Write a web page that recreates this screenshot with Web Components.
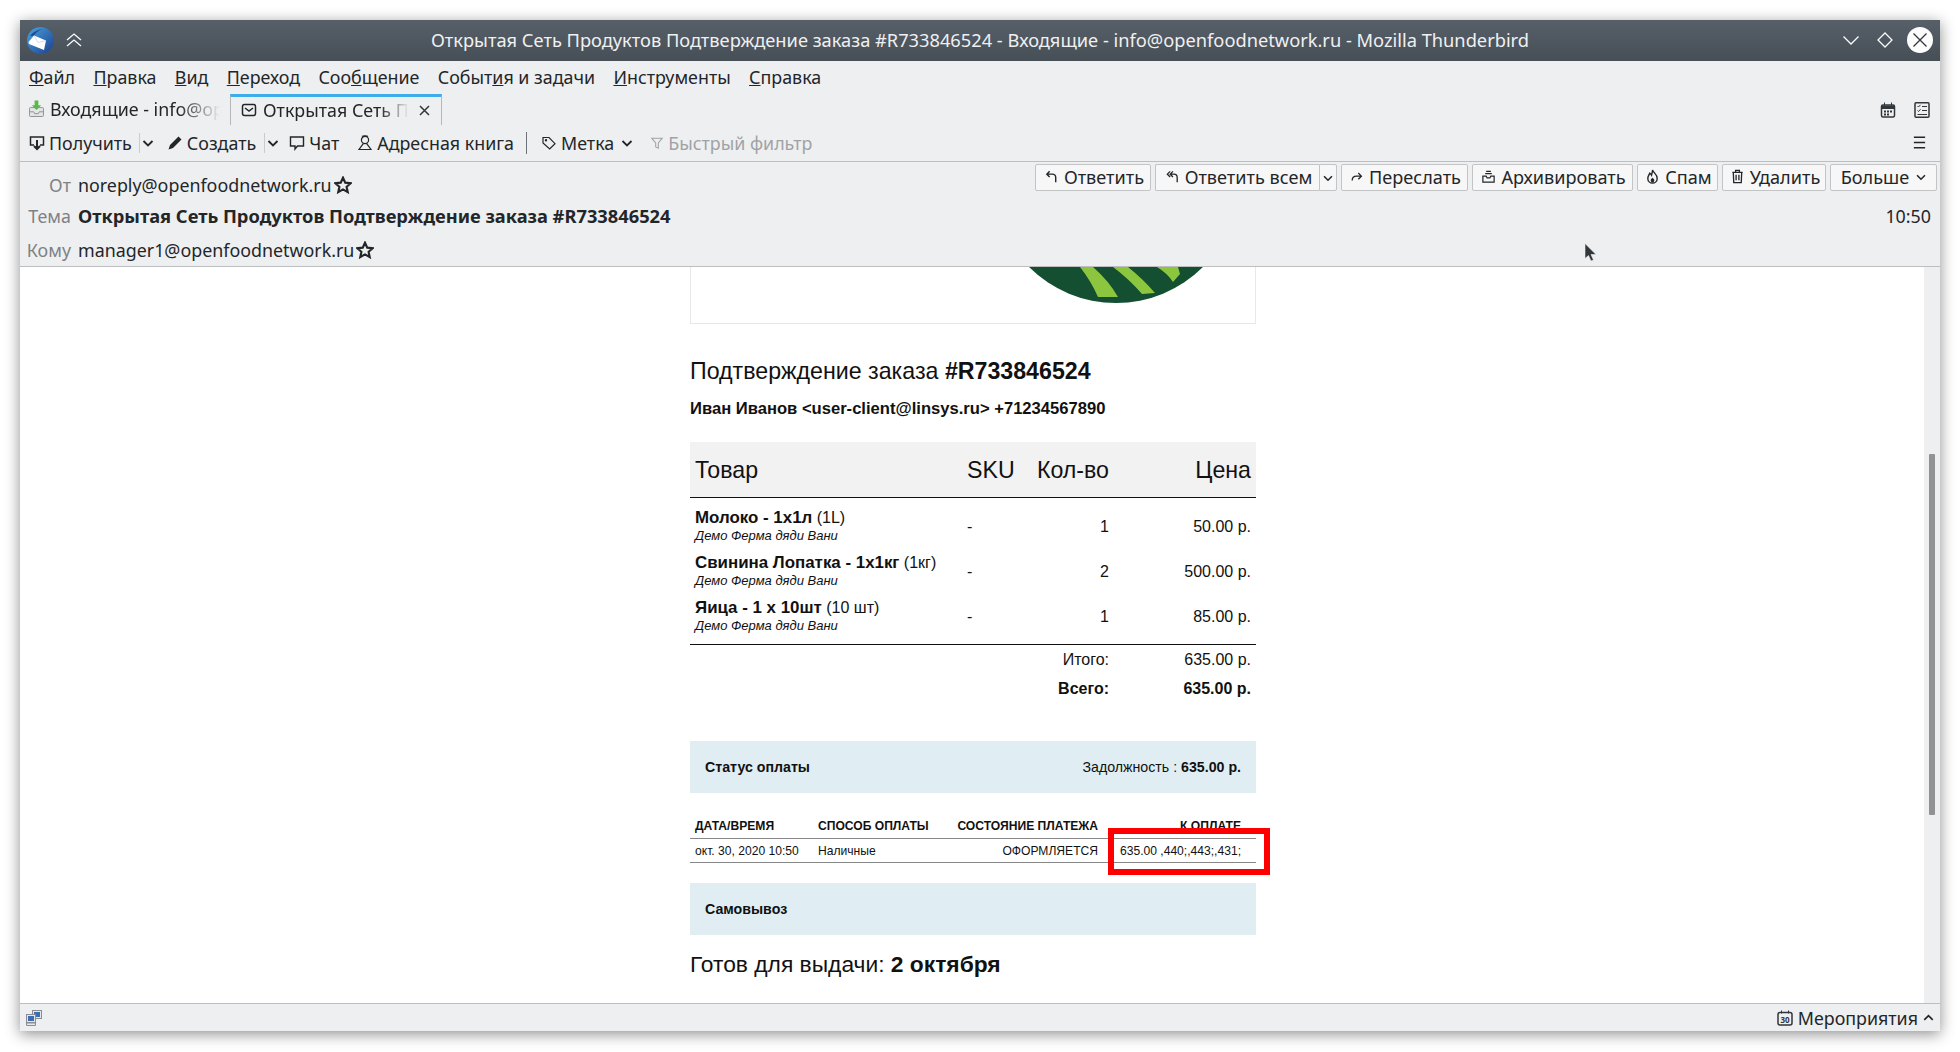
<!DOCTYPE html>
<html lang="ru">
<head>
<meta charset="utf-8">
<title>Thunderbird</title>
<style>
  html, body { margin: 0; height: 100%; overflow: hidden; background: #fff; }
  body { padding: 20px; box-sizing: border-box; font-family: "Noto Sans", sans-serif; }
</style>
</head>
<body>
<tb-window>
  <tb-titlebar>Открытая Сеть Продуктов Подтверждение заказа #R733846524 - Входящие - info@openfoodnetwork.ru - Mozilla Thunderbird</tb-titlebar>
  <tb-menubar>
    <span><u>Ф</u>айл</span><span><u>П</u>равка</span><span><u>В</u>ид</span><span><u>П</u>ереход</span><span>Соо<u>б</u>щение</span><span>Событ<u>и</u>я и задачи</span><span><u>И</u>нструменты</span><span><u>С</u>правка</span>
  </tb-menubar>
  <tb-tabbar></tb-tabbar>
  <tb-toolbar></tb-toolbar>
  <tb-msg-header></tb-msg-header>
  <tb-body>
    <order-mail></order-mail>
  </tb-body>
  <tb-statusbar></tb-statusbar>
  <tb-cursor></tb-cursor>
</tb-window>

<script>
const ICONS = {
  get: '<path d="M5 10H1.500V2h13v8H11" stroke-width="1.500"/><path d="M8 5v9M5 11l3 3 3-3" stroke-width="2"/>',
  pencil: '<path d="M11.500 1.500l3 3-8.500 8.500-4.500 1.500 1.500-4.500z" fill="currentColor" stroke="none"/>',
  chat: '<path d="M1.500 2h13v9H8.500l-2.500 3v-3H1.500z" stroke-width="1.400"/>',
  contacts: '<circle cx="8" cy="5" r="3.600"/><path d="M6.300 8.600L2 14.500h12L9.700 8.600"/><path d="M5 1.500c1-1 5-1 6 0"/>',
  tag: '<path d="M2 2.500h6l6 6.200-5.300 5.300L2 8z"/><circle cx="5" cy="5.300" r=".6"/>',
  filter: '<path d="M2 2.500h12L9.500 8v6l-3-1.500V8z"/>',
  chevd: '<path d="M3.500 6L8 10.500 12.500 6" stroke-width="1.800"/>',
  chevu: '<path d="M3.500 10.500L8 6l4.500 4.500" stroke-width="1.800"/>',
  reply: '<path d="M6 2.500L3 5.500 6 8.500M3 5.500h6a3.500 3.500 0 0 1 3.500 3.500v5" stroke-width="1.500"/>',
  replyall: '<path d="M5.500 2.500L2.500 5.500l3 3M8.500 2.500L5.500 5.500l3 3M5.500 5.500h4a3.500 3.500 0 0 1 3.500 3.500v5" stroke-width="1.400"/>',
  forward: '<path d="M2.500 12c0-3.500 2-5 5-5h5M9.500 3.500l3.500 3.500-3.500 3.500" stroke-width="1.500"/>',
  archive: '<path d="M2 7.500h3.500l1 2h3l1-2H14V14H2zM4.500 5h7M5.500 2.500h5" stroke-width="1.300"/>',
  spam: '<path d="M8 1c1 3 5 4.500 5 9a5 5 0 0 1-10 0c0-2.500 1.500-3.500 2-5.500 1 .5 1.500 1 2 2 .5-2 1-3.500 1-5.500z" stroke-width="1.500"/><path d="M8 9c.5 1 2 1.500 2 3a2 2 0 0 1-4 0c0-1.500 1.500-2 2-3z" fill="currentColor" stroke="none"/>',
  trash: '<path d="M2.500 3.500h11M6 3.500V1.500h4v2M3.500 3.500l.5 11h8l.5-11M6.500 6v6M9.500 6v6" stroke-width="1.400"/>',
  mail: '<rect x="1.500" y="2.500" width="13" height="11" rx="2" stroke-width="1.500"/><path d="M4 6l4 3 4-3" stroke-width="1.500"/>',
  star: '<path d="M8 1.500l2 4.400 4.800.5-3.600 3.200 1 4.700L8 11.900l-4.200 2.400 1-4.700L1.200 6.400 6 5.900z" stroke-width="1.900"/>',
  menu: '<path d="M2 2.500h12M2 8h12M2 13.500h12" stroke-width="1.600"/>'
};

class TbIcon extends HTMLElement {
  constructor() {
    super();
    this.attachShadow({ mode: "open" });
  }
  connectedCallback() {
    const size = this.getAttribute("size") || 16;
    const name = this.getAttribute("name");
    this.shadowRoot.innerHTML = `
      <style>
        :host { display: inline-flex; flex: none; width: ${size}px; height: ${size}px; }
        svg { width: 100%; height: 100%; fill: none; stroke: currentColor; stroke-width: 1.2; }
      </style>
      <svg viewBox="0 0 16 16">${ICONS[name] || ""}</svg>`;
  }
}
customElements.define("tb-icon", TbIcon);

class TbWindow extends HTMLElement {
  constructor() {
    super();
    this.attachShadow({ mode: "open" }).innerHTML = `
      <style>
        :host {
          display: flex;
          flex-direction: column;
          position: relative;
          width: 1920px;
          height: 1011px;
          background: #eeeff1;
          color: #232629;
          font: 17.85px/22px "Noto Sans", sans-serif;
          box-shadow: 0 3px 14px rgba(0, 0, 0, 0.45);
        }
      </style>
      <slot></slot>`;
  }
}
customElements.define("tb-window", TbWindow);

class TbTitlebar extends HTMLElement {
  constructor() {
    super();
    this.attachShadow({ mode: "open" }).innerHTML = `
      <style>
        :host {
          display: flex;
          flex: none;
          align-items: center;
          position: relative;
          height: 41px;
          background: linear-gradient(#575f69, #464e56);
          color: #eff0f1;
        }
        .title { flex: 1; text-align: center; white-space: nowrap; padding-bottom: 2px; font-size: 18.25px; }
        .logo { position: absolute; left: 7px; top: 7px; width: 27px; height: 27px; }
        .up { position: absolute; left: 46px; top: 12px; width: 16px; height: 16px; fill: none; stroke: #fcfcfc; stroke-width: 1.3; }
        .btns { position: absolute; right: 7px; top: 7px; display: flex; align-items: center; height: 26px; }
        .btns svg { fill: none; stroke: #fcfcfc; stroke-width: 1.3; }
        .d { margin: 0 14px 0 18px; }
        .close { width: 26px; height: 26px; border-radius: 50%; background: #fcfcfc; display: flex; align-items: center; justify-content: center; }
        .btns .close svg { stroke: #31363b; stroke-width: 1.3; }
      </style>
      <svg class="logo" viewBox="0 0 27 27">
        <defs><linearGradient id="bl" x1="0" y1="0" x2="1" y2="1"><stop offset="0" stop-color="#4aa3e0"/><stop offset="1" stop-color="#1d3f8c"/></linearGradient></defs>
        <circle cx="13.500" cy="13.500" r="13.500" fill="url(#bl)"/>
        <path d="M3 9c3-4 7-6 12-7-4 2-7 4-8 7z" fill="#1c4c96"/>
        <path d="M1.500 15L7 8.500 19 13.500 17 23 2 17z" fill="#fff"/>
        <path d="M7 8.500l4 7 8-2" fill="none" stroke="#c9d4e6" stroke-width="0.800"/>
      </svg>
      <svg class="up" viewBox="0 0 16 16"><path d="M1 8l7-6 7 6M1 14l7-6 7 6"/></svg>
      <div class="title"><slot></slot></div>
      <div class="btns">
        <svg width="16" height="16" viewBox="0 0 16 16"><path d="M0.500 4.500L8 12l7.500-7.500"/></svg>
        <svg class="d" width="16" height="16" viewBox="0 0 16 16"><path d="M8 1l7 7-7 7-7-7z"/></svg>
        <div class="close"><svg width="16" height="16" viewBox="0 0 16 16"><path d="M1.500 1.500l13 13M14.500 1.500l-13 13"/></svg></div>
      </div>`;
  }
}
customElements.define("tb-titlebar", TbTitlebar);

class TbMenubar extends HTMLElement {
  constructor() {
    super();
    this.attachShadow({ mode: "open" }).innerHTML = `
      <style>
        :host {
          display: flex;
          flex: none;
          align-items: center;
          gap: 18.4px;
          height: 33px;
          box-sizing: border-box;
          padding: 0 0 2px 9px;
          white-space: nowrap;
          color: #232629;
        }
      </style>
      <slot></slot>`;
  }
}
customElements.define("tb-menubar", TbMenubar);

class TbTabbar extends HTMLElement {
  constructor() {
    super();
    this.attachShadow({ mode: "open" }).innerHTML = `
      <style>
        :host {
          display: flex;
          flex: none;
          height: 31px;
          white-space: nowrap;
        }
        .tab { display: flex; align-items: center; box-sizing: border-box; }
        .t1 { width: 204px; padding-left: 9px; gap: 6px; margin-right: 6px; padding-bottom: 2px; }
        .t2 {
          width: 212px;
          padding: 0 0 2px 10px;
          gap: 6px;
          border: 1px solid #b4b6b8;
          border-top: 3px solid #3daee9;
          border-bottom: 0;
        }
        .label { flex: none; }
        .t1 .label { -webkit-mask-image: linear-gradient(to right, #000 74%, transparent 98%); mask-image: linear-gradient(to right, #000 74%, transparent 98%); }
        .t2 .label { -webkit-mask-image: linear-gradient(to right, #000 80%, transparent 100%); mask-image: linear-gradient(to right, #000 80%, transparent 100%); }
        .x { width: 13px; height: 13px; margin-left: auto; margin-right: 10px; flex: none; }
        .x path { stroke: #31363b; stroke-width: 1.5; }
        .spacer { flex: 1; }
        .cal { display: flex; gap: 18px; padding: 8px 10px 0 0; }
      </style>
      <div class="tab t1">
        <svg width="16" height="18" viewBox="0 0 16 18">
          <rect x="0.500" y="7.500" width="15" height="9.500" rx="1" fill="#e4e5e6" stroke="#8b8d8f"/>
          <path d="M1 12h4l1 2h4l1-2h4" fill="none" stroke="#8b8d8f"/>
          <path d="M6 0h4v5h3l-5 5-5-5h3z" fill="#58b947"/>
        </svg>
        <span class="label">Входящие - info@op</span>
      </div>
      <div class="tab t2">
        <tb-icon name="mail" size="16"></tb-icon>
        <span class="label">Открытая Сеть П</span>
        <svg class="x" viewBox="0 0 13 13"><path d="M2 2l9 9M11 2l-9 9"/></svg>
      </div>
      <div class="spacer"></div>
      <div class="cal">
        <svg width="16" height="16" viewBox="0 0 16 16">
          <rect x="1.500" y="3" width="13" height="12" rx="1.500" fill="none" stroke="#31363b" stroke-width="1.500"/>
          <path d="M1.500 4h13v2.500h-13zM4.500 0.500v3M11.500 0.500v3" fill="#31363b" stroke="#31363b"/>
          <path d="M4 8.500h2v2H4zM7 8.500h2v2H7zM10 8.500h2v2h-2zM4 11.500h2v2H4zM7 11.500h2v2H7z" fill="#31363b"/>
        </svg>
        <svg width="16" height="16" viewBox="0 0 16 16">
          <rect x="1" y="0.800" width="14" height="14.400" rx="1" fill="none" stroke="#31363b" stroke-width="1.500"/>
          <path d="M3.500 4l1 1 2-2.200M3.500 8.500l1 1 2-2.200M8 4.500h5M8 8.500h5M3.500 12.500h9.500" fill="none" stroke="#31363b"/>
        </svg>
      </div>`;
  }
}
customElements.define("tb-tabbar", TbTabbar);

class TbToolbar extends HTMLElement {
  constructor() {
    super();
    this.attachShadow({ mode: "open" }).innerHTML = `
      <style>
        :host {
          display: flex;
          flex: none;
          align-items: center;
          height: 37px;
          box-sizing: border-box;
          padding: 0 0 1px 9px;
          border-bottom: 1px solid #bcbebf;
          white-space: nowrap;
        }
        .item { display: flex; align-items: center; gap: 4px; }
        .sep { width: 1px; height: 20px; background: #c9cbcd; margin-left: 7px; }
        .bar { width: 1px; height: 22px; background: #6e7175; margin: 0 14px 0 12px; }
        .dim { color: #a0a3a5; }
        .menu { margin-left: auto; margin-right: 13px; display: flex; }
      </style>
      <span class="item"><tb-icon name="get"></tb-icon>Получить</span>
      <span class="sep"></span><tb-icon name="chevd"></tb-icon>
      <span class="item" style="margin-left:11px"><tb-icon name="pencil"></tb-icon>Создать</span>
      <span class="sep" style="margin-left:8px"></span><tb-icon name="chevd"></tb-icon>
      <span class="item" style="margin-left:8px"><tb-icon name="chat"></tb-icon>Чат</span>
      <span class="item" style="margin-left:18px"><tb-icon name="contacts"></tb-icon>Адресная книга</span>
      <span class="bar"></span>
      <span class="item"><tb-icon name="tag"></tb-icon>Метка</span>
      <tb-icon name="chevd" style="margin-left:5px"></tb-icon>
      <span class="item dim" style="margin-left:15px"><tb-icon name="filter" size="14"></tb-icon>Быстрый фильтр</span>
      <span class="menu"><tb-icon name="menu" size="15"></tb-icon></span>`;
  }
}
customElements.define("tb-toolbar", TbToolbar);

class TbBtn extends HTMLElement {
  constructor() {
    super();
    this.attachShadow({ mode: "open" });
  }
  connectedCallback() {
    const icon = this.getAttribute("icon");
    const w = this.getAttribute("w");
    const iconMarkup = icon ? `<tb-icon name="${icon}" size="${icon === "forward" ? 14 : 15}"></tb-icon>` : "";
    this.shadowRoot.innerHTML = `
      <style>
        :host {
          display: flex;
          align-items: center;
          justify-content: center;
          box-sizing: border-box;
          width: ${w}px;
          height: 27px;
          gap: 5px;
          padding: 0 0 2px 2px;
          background: #f7f7f8;
          border: 1px solid #c2c4c6;
          border-radius: 2px;
          white-space: nowrap;
          color: #232629;
          font-size: 18.1px;
        }
      </style>
      ${iconMarkup}<slot></slot>`;
  }
}
customElements.define("tb-btn", TbBtn);

class TbMsgHeader extends HTMLElement {
  constructor() {
    super();
    this.attachShadow({ mode: "open" }).innerHTML = `
      <style>
        :host {
          display: block;
          flex: none;
          height: 105px;
          box-sizing: border-box;
          border-bottom: 1px solid #bcbebf;
          white-space: nowrap;
        }
        .row { display: flex; }
        .r1 { height: 39px; align-items: flex-start; }
        .r2 { height: 30px; align-items: center; }
        .r3 { height: 34px; align-items: flex-start; padding-top: 8px; box-sizing: border-box; }
        .r1 .who { padding-top: 11.5px; }
        .who { display: flex; align-items: center; }
        .lab { width: 51px; margin-right: 7px; text-align: right; color: #7f8285; }
        .who tb-icon { margin-left: 2px; color: #232629; }
        b { font-weight: 700; font-size: 18.3px; }
        .btns { margin-left: auto; margin-top: 2px; margin-right: 3px; display: flex; gap: 4px; }
        .split { display: flex; }
        .split tb-btn:first-child { border-right: 0; border-radius: 2px 0 0 2px; }
        .arrow { display: flex; align-items: center; justify-content: center; width: 18px; height: 27px; box-sizing: border-box; background: #f7f7f8; border: 1px solid #c2c4c6; border-radius: 0 2px 2px 0; }
        .time { margin-left: auto; margin-right: 9px; }
      </style>
      <div class="row r1">
        <span class="who"><span class="lab">От</span>noreply@openfoodnetwork.ru<tb-icon name="star" size="18"></tb-icon></span>
        <div class="btns">
          <tb-btn icon="reply" w="116">Ответить</tb-btn>
          <div class="split"><tb-btn icon="replyall" w="164">Ответить всем</tb-btn><span class="arrow"><tb-icon name="chevd" size="14"></tb-icon></span></div>
          <tb-btn icon="forward" w="127">Переслать</tb-btn>
          <tb-btn icon="archive" w="161">Архивировать</tb-btn>
          <tb-btn icon="spam" w="81">Спам</tb-btn>
          <tb-btn icon="trash" w="104">Удалить</tb-btn>
          <tb-btn w="107">Больше <tb-icon name="chevd" size="14"></tb-icon></tb-btn>
        </div>
      </div>
      <div class="row r2">
        <span class="who"><span class="lab">Тема</span><b>Открытая Сеть Продуктов Подтверждение заказа #R733846524</b></span>
        <span class="time">10:50</span>
      </div>
      <div class="row r3">
        <span class="who"><span class="lab">Кому</span>manager1@openfoodnetwork.ru<tb-icon name="star" size="18"></tb-icon></span>
      </div>`;
  }
}
customElements.define("tb-msg-header", TbMsgHeader);

class TbBody extends HTMLElement {
  constructor() {
    super();
    this.attachShadow({ mode: "open" }).innerHTML = `
      <style>
        :host { display: flex; flex: 1; min-height: 0; }
        .view { flex: 1; background: #fff; overflow: hidden; padding-left: 670px; }
        .track { width: 16px; background: #eeeff1; position: relative; }
        .thumb { position: absolute; left: 5px; top: 187px; width: 6px; height: 361px; border-radius: 1px; background: #909294; }
      </style>
      <div class="view"><slot></slot></div>
      <div class="track"><div class="thumb"></div></div>`;
  }
}
customElements.define("tb-body", TbBody);

class OrderMail extends HTMLElement {
  constructor() {
    super();
    const item = (name, unit) => `
      <div class="item-cell"><div class="name"><b>${name}</b> ${unit}</div><div class="farm">Демо Ферма дяди Вани</div></div>`;
    const row = (name, unit, qty, price) => `
      <div class="row">${item(name, unit)}<div class="sku">-</div><div class="qty">${qty}</div><div class="price">${price}</div></div>`;
    this.attachShadow({ mode: "open" }).innerHTML = `
      <style>
        :host {
          display: block;
          width: 566px;
          color: #111;
          font: 16px/18px "Liberation Sans", Arial, sans-serif;
        }
        .logo { height: 57px; box-sizing: border-box; border: 1px solid #e8e8e8; border-top: 0; }
        .logo svg { display: block; width: 564px; height: 37px; }
        .title { margin-top: 34px; font-size: 23.2px; line-height: 26px; }
        .who { margin-top: 16px; font-weight: 700; font-size: 16.6px; }
        .cols { display: grid; grid-template-columns: 272px 62px 90px 142px; }
        .head { height: 55px; align-items: center; background: #f2f2f2; font-size: 23.2px; border-bottom: 1px solid #111; margin-top: 24px; }
        .head > div, .row > div { padding: 0 5px; white-space: nowrap; }
        .rows { padding: 6px 0 5px; border-bottom: 1px solid #111; }
        .row { display: grid; grid-template-columns: 272px 62px 90px 142px; height: 45px; align-items: center; }
        .qty, .price, .right { text-align: right; }
        .row > .item-cell { align-self: start; padding-top: 5px; }
        .name b { font-size: 16.9px; }
        .farm { font-size: 13px; font-style: italic; }
        .tot { display: grid; grid-template-columns: 424px 142px; height: 29px; align-items: center; }
        .tot > div { text-align: right; padding-right: 5px; }
        .band { display: flex; justify-content: space-between; align-items: center; height: 52px; padding: 0 15px; box-sizing: border-box; background: #e0eef4; font-size: 14.2px; }
        .status { margin-top: 38px; }
        .pay { margin-top: 22px; font-size: 12.1px; }
        .pr { display: grid; grid-template-columns: 123px 138px 152px 153px; box-sizing: border-box; height: 24px; align-items: center; border-bottom: 1px solid #888; }
        .ph { padding-bottom: 2px; }
        .pr > div { padding: 0 5px; white-space: nowrap; }
        .ph { font-weight: 700; }
        .pr > .r { text-align: right; }
        .pr > .amount { padding-right: 15px; }
        .pick { margin-top: 20px; }
        .ready { margin-top: 16px; font-size: 22.8px; line-height: 26px; }
        .mark { position: absolute; left: 1088px; top: 808px; width: 162px; height: 47px; box-sizing: border-box; border: 6px solid #f00; }
      </style>
      <div class="logo">
        <svg viewBox="0 0 564 37">
          <circle cx="425" cy="-87" r="123" fill="#134f30"/>
          <path d="M389 0H402Q418 14 427 30H407Q400 14 389 0zM422 0H437Q452 12 464 26L451 27Q438 12 422 0zM466 0H487L489 7 482 15Q476 6 466 0z" fill="#8cc63f"/>
        </svg>
      </div>
      <div class="title">Подтверждение заказа <b>#R733846524</b></div>
      <div class="who">Иван Иванов &lt;user-client@linsys.ru&gt; +71234567890</div>
      <div class="cols head"><div>Товар</div><div>SKU</div><div class="right">Кол-во</div><div class="right">Цена</div></div>
      <div class="rows">
        ${row("Молоко - 1х1л", "(1L)", 1, "50.00 р.")}
        ${row("Свинина Лопатка - 1х1кг", "(1кг)", 2, "500.00 р.")}
        ${row("Яица - 1 х 10шт", "(10 шт)", 1, "85.00 р.")}
      </div>
      <div class="tot"><div>Итого:</div><div>635.00 р.</div></div>
      <div class="tot"><div><b>Всего:</b></div><div><b>635.00 р.</b></div></div>
      <div class="band status"><b>Статус оплаты</b><span>Задолжность : <b>635.00 р.</b></span></div>
      <div class="pay">
        <div class="pr ph"><div>ДАТА/ВРЕМЯ</div><div>СПОСОБ ОПЛАТЫ</div><div class="r">СОСТОЯНИЕ ПЛАТЕЖА</div><div class="r amount">К ОПЛАТЕ</div></div>
        <div class="pr"><div>окт. 30, 2020 10:50</div><div>Наличные</div><div class="r">ОФОРМЛЯЕТСЯ</div><div class="r amount">635.00 ,440;,443;,431;</div></div>
      </div>
      <div class="band pick"><b>Самовывоз</b></div>
      <div class="ready">Готов для выдачи: <b>2 октября</b></div>
      <div class="mark"></div>`;
  }
}
customElements.define("order-mail", OrderMail);

class TbStatusbar extends HTMLElement {
  constructor() {
    super();
    this.attachShadow({ mode: "open" }).innerHTML = `
      <style>
        :host {
          display: flex;
          flex: none;
          align-items: center;
          height: 28px;
          box-sizing: border-box;
          border-top: 1px solid #bcbebf;
          padding: 0 4px 0 6px;
        }
        .right { margin-left: auto; display: flex; align-items: center; gap: 5px; }
        .right tb-icon { margin-left: -2px; }
      </style>
      <svg width="16" height="16" viewBox="0 0 16 16">
        <rect x="6.500" y="0.500" width="9" height="8" fill="#e6e7e8" stroke="#8b8d8f"/><rect x="8" y="2" width="6" height="5" fill="#3f6db5"/>
        <rect x="0.500" y="4.500" width="9" height="8" fill="#e6e7e8" stroke="#8b8d8f"/><rect x="2" y="6" width="6" height="5" fill="#3f6db5"/>
        <path d="M0.500 13h9v2.500h-9z" fill="#e6e7e8" stroke="#8b8d8f"/>
      </svg>
      <div class="right">
        <svg width="16" height="16" viewBox="0 0 16 16">
          <rect x="1" y="2.500" width="14" height="12.500" rx="2" fill="none" stroke="#31363b" stroke-width="1.500"/>
          <path d="M4.500 0.500v3M11.500 0.500v3" stroke="#31363b"/>
          <text x="8" y="12.500" text-anchor="middle" font-size="8" font-weight="700" font-family="Noto Sans" fill="#31363b">30</text>
        </svg>
        <span>Мероприятия</span>
        <tb-icon name="chevu" size="15"></tb-icon>
      </div>`;
  }
}
customElements.define("tb-statusbar", TbStatusbar);

class TbCursor extends HTMLElement {
  constructor() {
    super();
    this.attachShadow({ mode: "open" }).innerHTML = `
      <style>
        :host { position: absolute; left: 1564px; top: 223px; width: 13px; height: 20px; }
      </style>
      <svg width="13" height="20" viewBox="0 0 13 20"><path d="M1 0.500v15l3.500-3 2.500 5.500 2.500-1-2.500-5.500h5z" fill="#31363b" stroke="#eee" stroke-width="0.600"/></svg>`;
  }
}
customElements.define("tb-cursor", TbCursor);
</script>
</body>
</html>
